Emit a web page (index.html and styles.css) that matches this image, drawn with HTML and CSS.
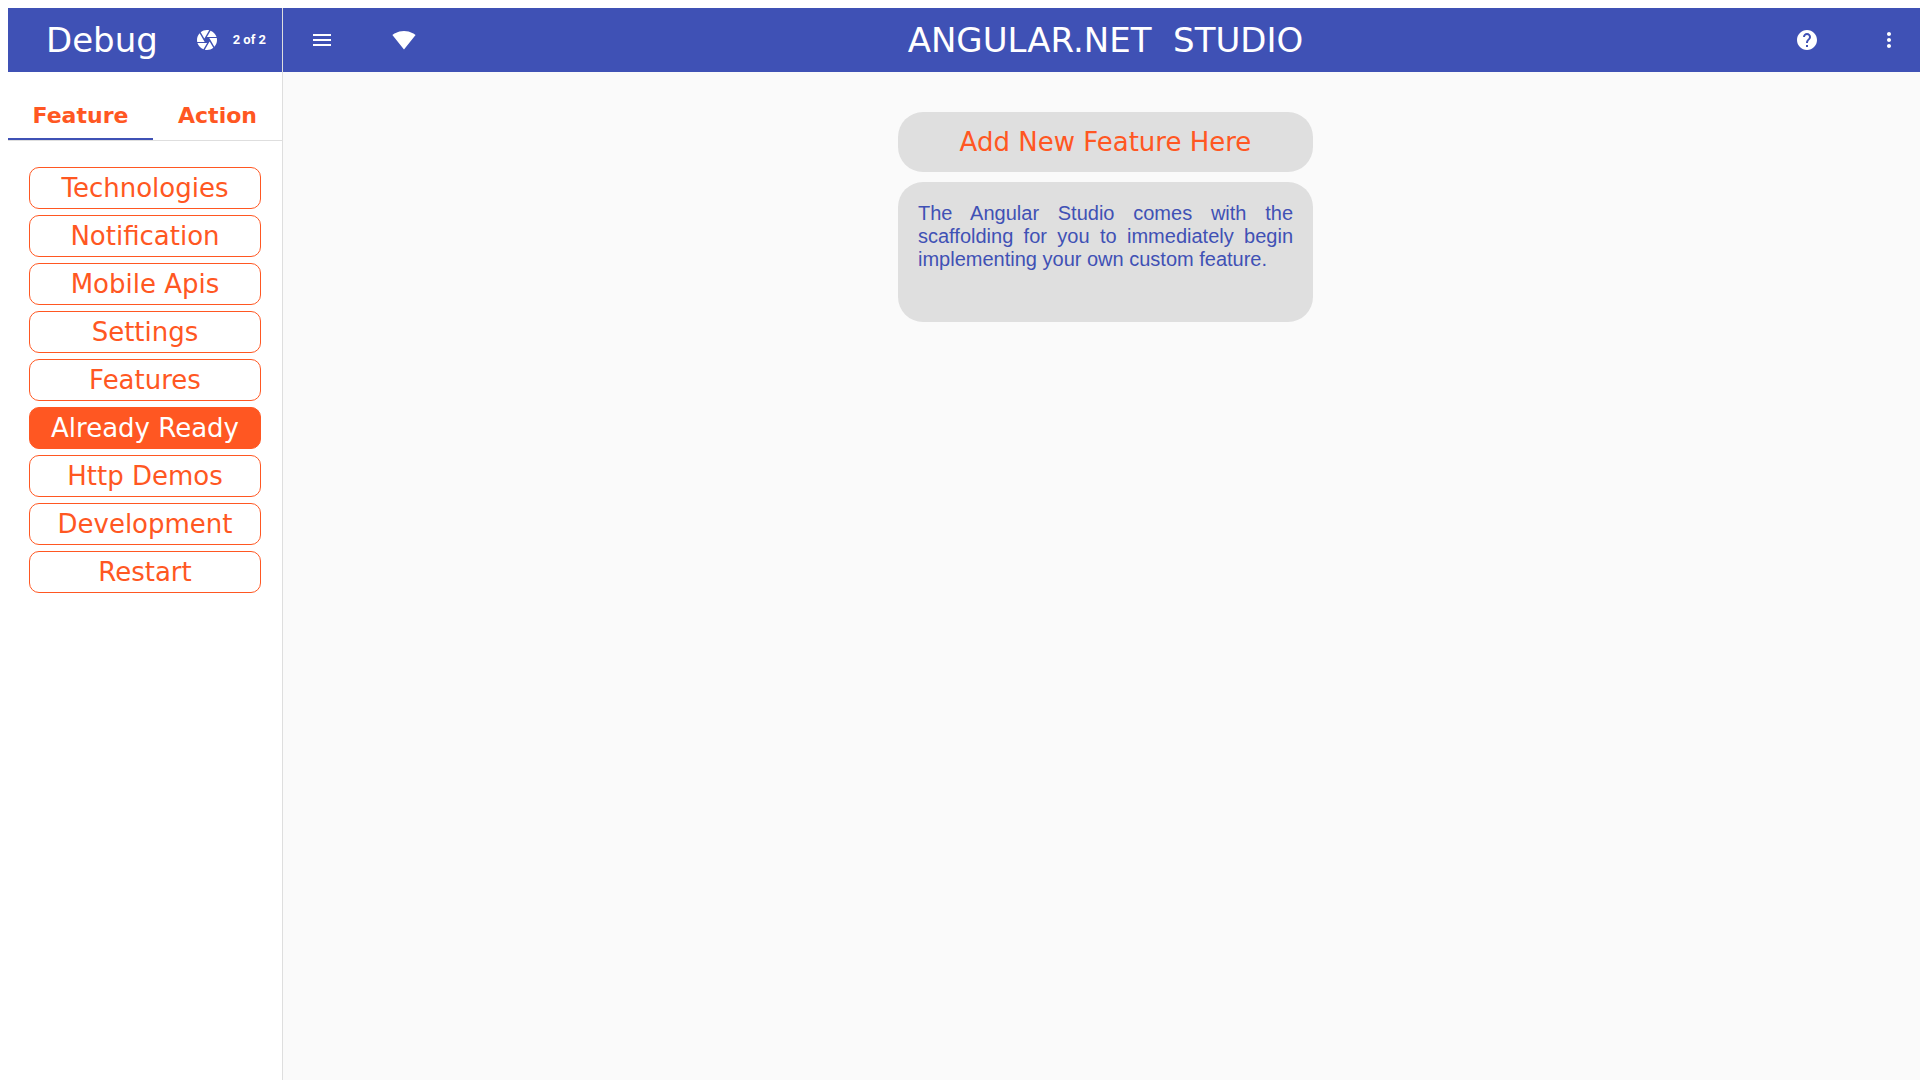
FILE: index.html
```html
<!DOCTYPE html>
<html lang="en">
<head>
<meta charset="utf-8">
<meta name="viewport" content="width=device-width, initial-scale=1">
<title>Angular.Net Studio</title>
<link rel="stylesheet" href="styles.css">
</head>
<body>
<div class="layout">
  <aside class="sidebar">
    <header class="bar side-bar">
      <h2 class="side-title">Debug</h2>
      <div class="status">
        <svg class="icon" viewBox="0 0 24 24" aria-hidden="true"><path d="M9.4 10.5l4.77-8.26C13.47 2.09 12.75 2 12 2c-2.4 0-4.6.85-6.32 2.25l3.66 6.35.06-.1zM21.54 9c-.92-2.92-3.15-5.26-6-6.34L11.88 9h9.66zm.26 1h-7.49l.29.5 4.76 8.25C21 16.97 22 14.61 22 12c0-.69-.07-1.35-.2-2zM8.54 12l-3.9-6.75C3.01 7.03 2 9.39 2 12c0 .69.07 1.35.2 2h7.49l-1.15-2zm-6.08 3c.92 2.92 3.15 5.26 6 6.34L12.12 15H2.46zm11.27 0l-3.9 6.76c.7.15 1.42.24 2.17.24 2.4 0 4.6-.85 6.32-2.25l-3.66-6.35-.93 1.6z"/></svg>
        <span class="count">2 of 2</span>
      </div>
    </header>
    <div class="tabs" role="tablist">
      <button class="tab tab-active" role="tab" aria-selected="true">Feature</button>
      <button class="tab" role="tab" aria-selected="false">Action</button>
    </div>
    <nav class="menu">
      <button class="item">Technologies</button>
      <button class="item">Notification</button>
      <button class="item">Mobile Apis</button>
      <button class="item">Settings</button>
      <button class="item">Features</button>
      <button class="item item-active">Already Ready</button>
      <button class="item">Http Demos</button>
      <button class="item">Development</button>
      <button class="item">Restart</button>
    </nav>
  </aside>
  <main class="main">
    <header class="bar top-bar">
      <div class="actions">
        <button class="icon-button" aria-label="Menu"><svg class="icon" viewBox="0 0 24 24"><path d="M3 18h18v-2H3v2zm0-5h18v-2H3v2zm0-7v2h18V6H3z"/></svg></button>
        <button class="icon-button" aria-label="Network"><svg class="icon" viewBox="0 0 24 24"><path d="M12 21.5L23.6 7C23.200 6.700 18.700 3 12 3S.8 6.700.4 7z"/></svg></button>
      </div>
      <h1 class="title">ANGULAR.NET&nbsp; STUDIO</h1>
      <div class="actions">
        <button class="icon-button" aria-label="Help"><svg class="icon" viewBox="0 0 24 24"><path d="M12 2C6.480 2 2 6.480 2 12s4.480 10 10 10 10-4.480 10-10S17.520 2 12 2zm1 17h-2v-2h2v2zm2.070-7.750l-.9.920C13.450 12.900 13 13.500 13 15h-2v-.5c0-1.100.450-2.100 1.170-2.830l1.240-1.260c.37-.36.590-.86.590-1.410 0-1.100-.9-2-2-2s-2 .9-2 2H8c0-2.210 1.790-4 4-4s4 1.790 4 4c0 .88-.36 1.680-.93 2.250z"/></svg></button>
        <button class="icon-button" aria-label="More"><svg class="icon" viewBox="0 0 24 24"><path d="M12 8c1.100 0 2-.9 2-2s-.9-2-2-2-2 .9-2 2 .9 2 2 2zm0 2c-1.100 0-2 .9-2 2s.9 2 2 2 2-.9 2-2-.9-2-2-2zm0 6c-1.100 0-2 .9-2 2s.9 2 2 2 2-.9 2-2-.9-2-2-2z"/></svg></button>
      </div>
    </header>
    <section class="content">
      <h2 class="card card-title">Add New Feature Here</h2>
      <p class="card card-text">The Angular Studio comes with the scaffolding for you to immediately begin implementing your own custom feature.</p>
    </section>
  </main>
</div>
</body>
</html>
```
FILE: styles.css
```css
* { box-sizing: border-box; }
body {
  margin: 8px 0 0 8px;
  background: #fff;
  font-family: "DejaVu Sans", sans-serif;
}
h1, h2, p { margin: 0; }
button {
  margin: 0;
  padding: 0;
  border: 0;
  background: none;
  color: inherit;
  font: inherit;
  cursor: pointer;
}
.layout {
  display: grid;
  grid-template-columns: 275px 1fr;
  min-height: calc(100vh - 8px);
}
.sidebar { border-right: 1px solid #dedede; }
.main { background: #fafafa; }
.bar {
  display: flex;
  align-items: center;
  height: 64px;
  background: #3f51b5;
  color: #fff;
}
.side-bar {
  justify-content: space-between;
  padding: 0 16px 0 38px;
}
.side-title {
  font-size: 34px;
  font-weight: 400;
  line-height: 40px;
}
.status {
  display: flex;
  align-items: center;
  gap: 14px;
}
.count { font: 700 13px/20px Roboto, sans-serif; }
.icon {
  display: block;
  width: 24px;
  height: 24px;
  fill: currentColor;
}
.tabs {
  display: grid;
  grid-template-columns: 145px 1fr;
  height: 69px;
  padding-top: 20px;
  border-bottom: 1px solid #dedede;
}
.tab {
  border-bottom: 2px solid transparent;
  color: #ff5722;
  font-size: 22px;
  font-weight: 700;
}
.tab-active { border-bottom-color: #3f51b5; }
.menu {
  display: grid;
  gap: 6px;
  padding: 26px 21px;
}
.item {
  height: 42px;
  border: 1px solid #ff5722;
  border-radius: 10px;
  color: #ff5722;
  font-size: 26px;
  line-height: 40px;
}
.item-active {
  background: #ff5722;
  color: #fff;
}
.top-bar {
  justify-content: space-between;
  padding: 0 7px 0 15px;
}
.actions {
  display: flex;
  gap: 34px;
}
.icon-button {
  display: grid;
  place-items: center;
  width: 48px;
  height: 48px;
}
.title {
  font-size: 34px;
  font-weight: 400;
  line-height: 40px;
}
.content {
  display: grid;
  justify-content: center;
  grid-template-columns: minmax(0, 415px);
  gap: 10px;
  padding: 40px 0 40px 8px;
}
.card {
  border-radius: 25px;
  background: #dfdfdf;
}
.card-title {
  padding: 10px 20px;
  color: #ff5722;
  font-size: 26px;
  font-weight: 400;
  line-height: 40px;
  text-align: center;
}
.card-text {
  min-height: 140px;
  padding: 20px;
  color: #3f51b5;
  font: 20px/23px "Liberation Sans", Arial, sans-serif;
  text-align: justify;
}
```
